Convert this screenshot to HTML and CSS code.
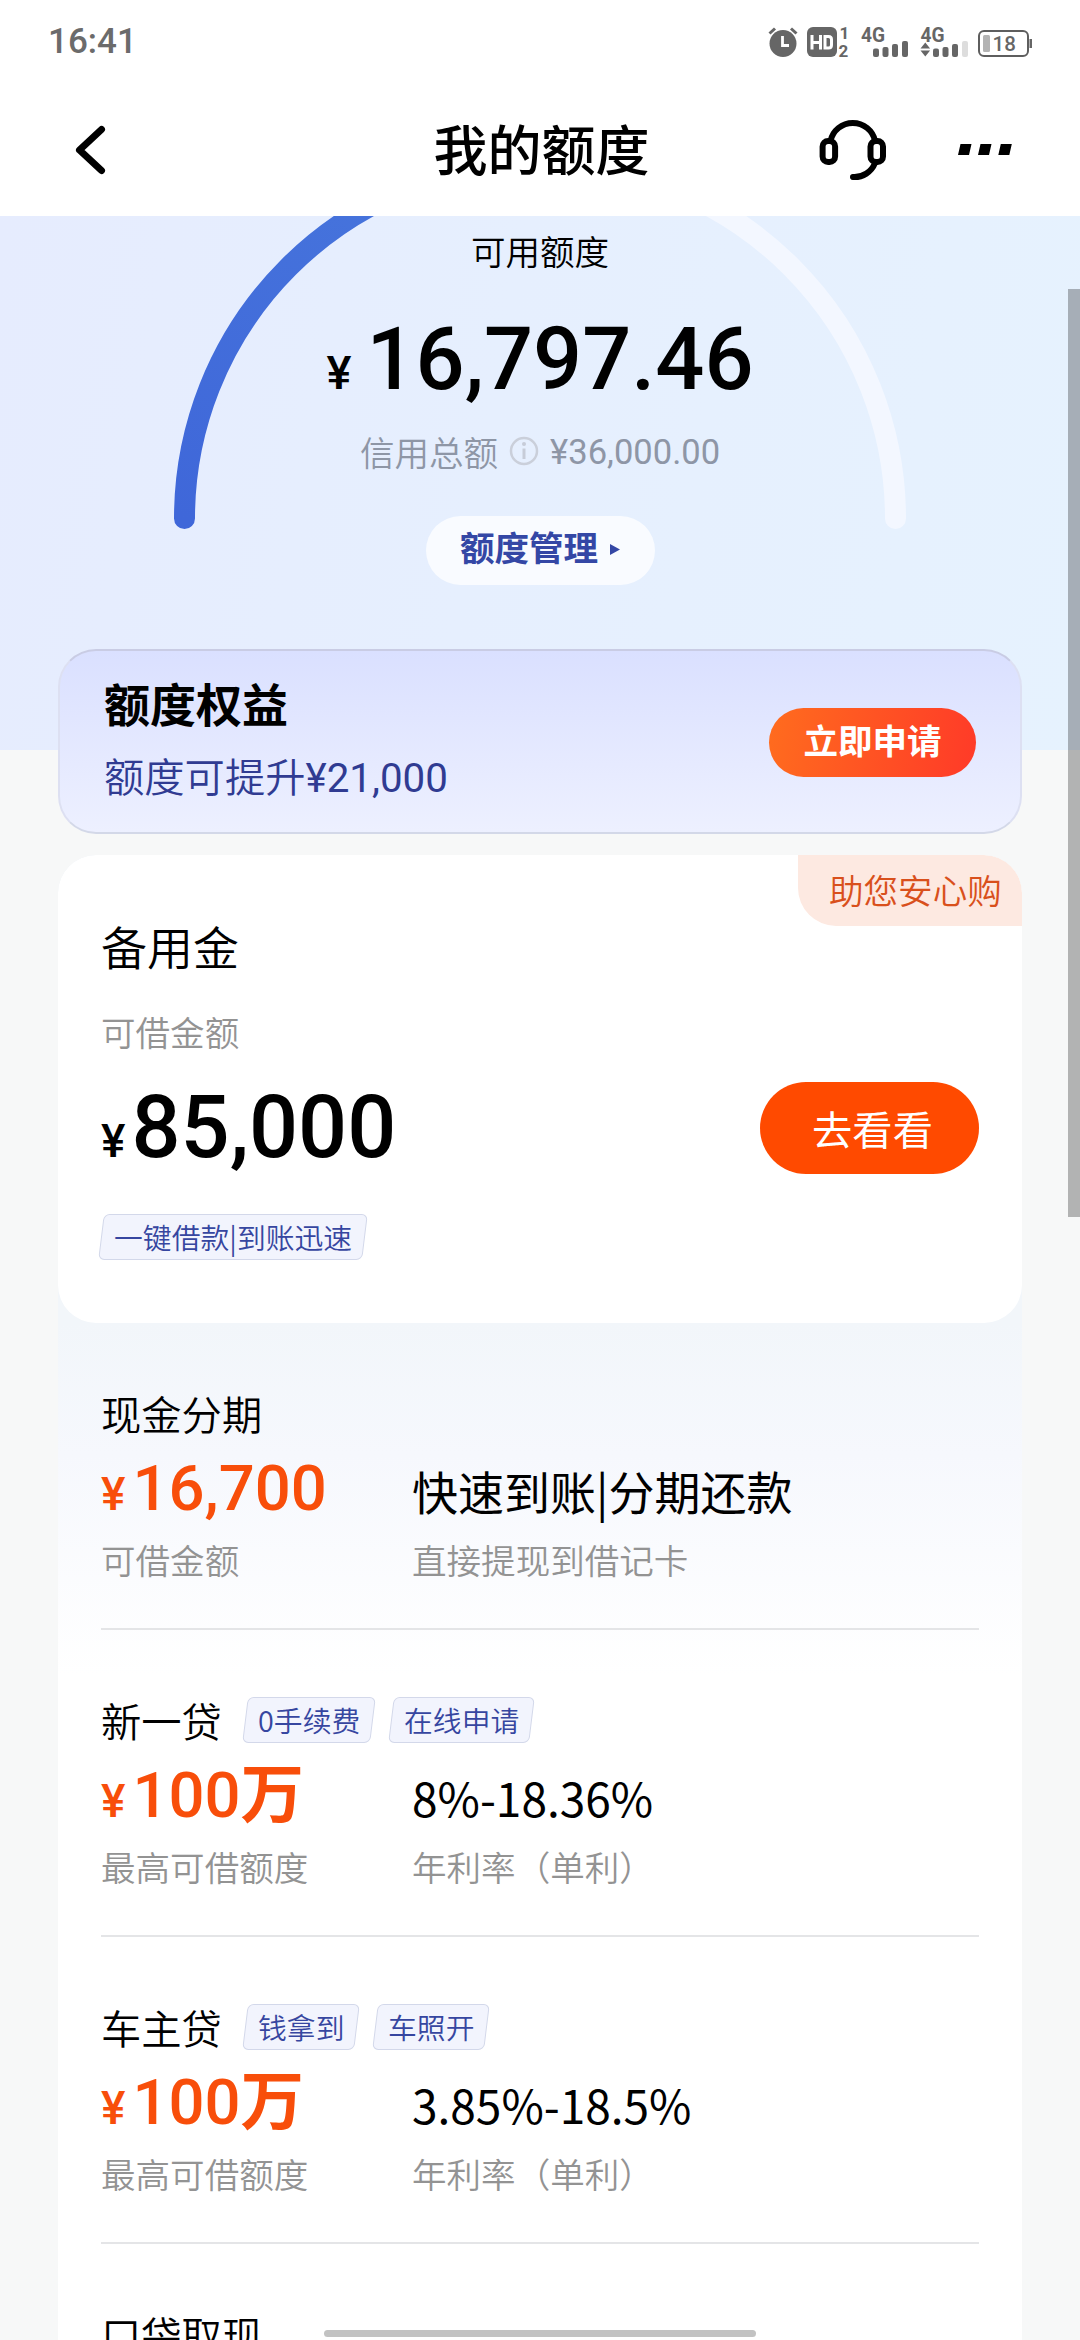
FILE: index.html
```html
<!DOCTYPE html>
<html lang="zh-CN">
<head>
<meta charset="utf-8">
<title>我的额度</title>
<link rel="stylesheet" href="styles.css">
</head>
<body>
<div class="screen">
  <div class="statusbar">
    <span class="clock">16:41</span>
    <svg class="status-icons" width="266" height="36" viewBox="767 24 266 36">
      <g fill="#666">
        <circle cx="783" cy="43.5" r="13.5"/>
        <path d="M769.5 33.5l5.500-5M796.500 33.500l-5.500-5" stroke="#666" stroke-width="3"/>
        <path d="M782.500 36v9.500h6.500" fill="none" stroke="#fff" stroke-width="2.800"/>
        <rect x="807" y="27" width="30" height="30" rx="6"/>
        <path d="M812 35v14.500M820.500 35v14.500M812 42.500h8.500M825 36.500h3.500q3 0 3 3v5.500q0 3-3 3h-3.500z" fill="none" stroke="#fff" stroke-width="3"/>
        <g class="mini">
          <text x="839.500" y="39" font-size="17">1</text>
          <text x="838.500" y="56.500" font-size="17">2</text>
          <text x="861" y="41.500" font-size="20" textLength="24" lengthAdjust="spacingAndGlyphs">4G</text>
          <text x="920.500" y="41.500" font-size="20" textLength="24" lengthAdjust="spacingAndGlyphs">4G</text>
        </g>
        <rect x="873" y="48.500" width="6" height="8.500" rx="2"/>
        <rect x="882.500" y="47" width="6" height="10" rx="2"/>
        <rect x="892" y="44" width="6" height="13" rx="2"/>
        <rect x="902" y="41" width="6" height="16" rx="2"/>
        <path d="M920.500 48.500l4.800-6 4.800 6zM920.500 50.500l4.800 6 4.800-6z"/>
        <rect x="933" y="48.500" width="6" height="8.500" rx="2"/>
        <rect x="942.500" y="47" width="6" height="10" rx="2"/>
        <rect x="952" y="44" width="6" height="13" rx="2"/>
        <rect x="962" y="41" width="6" height="16" rx="2" fill="#ddd"/>
        <rect x="979" y="31" width="49" height="25" rx="5" fill="none" stroke="#5e5e5e" stroke-width="2"/>
        <rect x="1029.500" y="39" width="2.500" height="9"/>
        <rect x="983" y="35" width="7" height="17" rx="1.500" fill="#b3b3b3"/>
        <text class="level" x="992.500" y="51" font-size="20.500">18</text>
      </g>
    </svg>
  </div>

  <header class="navbar">
    <svg class="back" width="40" height="56" viewBox="70 122 40 56"><path d="M101.500 129.500L79.500 150l22 20.500" fill="none" stroke="#000" stroke-width="7" stroke-linecap="round" stroke-linejoin="round"/></svg>
    <h1>我的额度</h1>
    <div class="actions">
      <svg width="70" height="64" viewBox="817 118 70 64"><g fill="none" stroke="#000" stroke-width="6" stroke-linecap="round"><path d="M829.500 141a22.800 22.800 0 0 1 44.600 0"/><rect x="821.600" y="141" width="12.500" height="21" rx="5.500"/><rect x="869.500" y="141" width="12.500" height="21" rx="5.500"/><path d="M874 163a22 22 0 0 1-22 14"/></g></svg>
      <svg width="56" height="14" viewBox="956 143 56 14"><path d="M959.500 144h11l-2.500 11h-11zM979.500 144h11l-2.500 11h-11zM999.800 144h11l-2.500 11h-11z"/></svg>
    </div>
  </header>

  <main class="content">
    <section class="hero">
      <svg class="gauge" width="1080" height="534" viewBox="0 216 1080 534">
        <defs><linearGradient id="arc" x1="0" y1="1" x2="0.5" y2="0"><stop offset="0" stop-color="#3f67d9"/><stop offset="1" stop-color="#4674dc"/></linearGradient></defs>
        <path d="M540 163A355.500 355.500 0 0 1 895.500 518.500" fill="none" stroke="#f3f7ff" stroke-width="21" stroke-linecap="round"/>
        <path d="M184.500 518.500A355.500 355.500 0 0 1 540 163" fill="none" stroke="url(#arc)" stroke-width="21" stroke-linecap="round"/>
      </svg>
      <div class="hero-label">可用额度</div>
      <div class="hero-amount"><span class="yen">¥</span><span>16,797.46</span></div>
      <div class="hero-total">
        <span>信用总额</span>
        <svg width="30" height="30" viewBox="0 0 30 30"><circle cx="15" cy="15" r="13" fill="none" stroke="#cacfda" stroke-width="2.500"/><path d="M15 12.500v10.500" stroke="#c7ccd8" stroke-width="3"/><circle cx="15" cy="8" r="2" fill="#c7ccd8"/></svg>
        <span class="num">¥36,000.00</span>
      </div>
      <div class="manage">额度管理<svg width="10" height="11" viewBox="0 0 10 11"><path d="M0 0l10 5.500-10 5.500z" fill="#3447a5"/></svg></div>
    </section>

    <section class="rights">
      <div>
        <h2>额度权益</h2>
        <p>额度可提升<span class="num">¥21,000</span></p>
      </div>
      <div class="apply">立即申请</div>
    </section>

    <section class="products">
      <div class="reserve">
        <div class="ribbon">助您安心购</div>
        <h3>备用金</h3>
        <div class="caption">可借金额</div>
        <div class="reserve-row">
          <div class="reserve-amount"><span class="yen">¥</span>85,000</div>
          <div class="look">去看看</div>
        </div>
        <div class="tags"><span class="tag"><span>一键借款|到账迅速</span></span></div>
      </div>

      <div class="loan">
        <div class="loan-head">现金分期</div>
        <div class="loan-main"><div class="amount"><span class="yen">¥</span>16,700</div><div class="info">快速到账|分期还款</div></div>
        <div class="loan-sub"><div>可借金额</div><div>直接提现到借记卡</div></div>
      </div>
      <div class="loan">
        <div class="loan-head">新一贷<span class="tag"><span>0手续费</span></span><span class="tag"><span>在线申请</span></span></div>
        <div class="loan-main"><div class="amount"><span class="yen">¥</span>100<span class="wan">万</span></div><div class="info">8%-18.36%</div></div>
        <div class="loan-sub"><div>最高可借额度</div><div>年利率（单利）</div></div>
      </div>
      <div class="loan">
        <div class="loan-head">车主贷<span class="tag"><span>钱拿到</span></span><span class="tag"><span>车照开</span></span></div>
        <div class="loan-main"><div class="amount"><span class="yen">¥</span>100<span class="wan">万</span></div><div class="info">3.85%-18.5%</div></div>
        <div class="loan-sub"><div>最高可借额度</div><div>年利率（单利）</div></div>
      </div>
      <div class="loan">
        <div class="loan-head">口袋取现</div>
      </div>
    </section>
  </main>
  <div class="scrollbar"></div>
  <div class="home-indicator"></div>
</div>
</body>
</html>
```
FILE: styles.css
```css
* { box-sizing: border-box; }
body, h1, h2, h3, p { margin: 0; }
body {
  background: #fff;
  color: #000;
  font-family: "Noto Sans CJK SC", sans-serif;
  font-weight: 350;
}
.screen { position: relative; width: 1080px; height: 2340px; overflow: hidden; display: flex; flex-direction: column; }
.num { font-family: Roboto, sans-serif; line-height: 0; font-weight: 400; }

.statusbar { height: 84px; flex: none; display: flex; justify-content: space-between; align-items: flex-start; padding: 24px 47px 0 48px; }
.clock { font: 500 35px/36px Roboto, sans-serif; color: #6b6b6b; }
.mini text { font-family: Roboto, sans-serif; font-weight: 700; }
.level { font-family: Roboto, sans-serif; font-weight: 500; }

.navbar { height: 132px; flex: none; display: grid; grid-template-columns: 1fr auto 1fr; align-items: center; padding: 0 67px 0 70px; }
.navbar h1 { font-size: 54px; line-height: 127px; font-weight: 500; height: 132px; }
.actions { display: flex; align-items: center; justify-content: flex-end; gap: 69px; }

.content { flex: 1; min-height: 0; background: #f7f8f8; display: flex; flex-direction: column; }
.hero {
  position: relative; flex: none; height: 534px;
  background: linear-gradient(100deg, #e6ecfe 0%, #e6effe 45%, #e6f2fe 100%);
  display: flex; flex-direction: column; align-items: center;
}
.gauge { position: absolute; left: 0; top: 0; }
.hero-label, .hero-amount, .hero-total, .manage { position: relative; }
.hero-label { margin-top: 9px; font-size: 34.56px; line-height: 50px; }
.hero-amount { margin-top: 35px; height: 100px; display: flex; align-items: baseline; gap: 15px; font: 500 86.4px/100px Roboto, sans-serif; }
.hero-amount .yen { font-size: 47px; }
.hero-total { margin-top: 16px; height: 50px; display: flex; align-items: center; gap: 11px; font-size: 34.56px; line-height: 50px; color: #8e96a6; }
.hero-total .num { line-height: 50px; padding-top: 2px; }
.manage { margin-top: 40px; width: 229px; height: 69px; border-radius: 35px; background: rgba(255,255,255,.75); color: #3447a5; font-size: 34.56px; line-height: 61px; font-weight: 700; display: flex; justify-content: center; gap: 12px; }
.manage svg { margin-top: 28px; }

.rights {
  position: relative; flex: none; margin: -101px 58px 0; height: 185px; padding: 18px 46px 0 44px;
  border-radius: 38px; border: 2px solid #c9cce4; border-left-color: #dde0f2; border-right-color: #dde0f2; border-bottom-color: #d3d8e8;
  background: linear-gradient(#dae0ff, #edf0ff);
  display: flex; justify-content: space-between;
}
.rights h2 { font-size: 46px; line-height: 66px; font-weight: 700; }
.rights p { margin-top: 11px; font-size: 40.3px; line-height: 58px; height: 58px; color: #303b92; }
.apply { margin-top: 39px; width: 207px; height: 69px; border-radius: 35px; background: linear-gradient(100deg, #ff6c1e, #ff3a28); color: #fff; font-size: 34.56px; line-height: 62px; font-weight: 700; text-align: center; margin-right: -2px; }

.products { flex: none; height: 1486px; margin: 21px 58px 0; border-radius: 38px 38px 0 0; background: linear-gradient(#f2f6fa 468px, #f6f8fd 600px, #fff 820px); overflow: hidden; }
.reserve { position: relative; height: 468px; border-radius: 38px; background: #fff; padding: 57px 43px 0; }
.ribbon { position: absolute; right: 0; top: 0; width: 224px; height: 71px; border-radius: 0 38px 0 38px; background: #fde9e1; color: #d9501c; font-size: 34.56px; line-height: 68px; padding-left: 31px; }
.reserve h3 { font-size: 46px; line-height: 66px; font-weight: 350; }
.caption { margin-top: 28px; font-size: 34.56px; line-height: 50px; color: #939393; }
.reserve-row { display: flex; justify-content: space-between; margin-top: 26px; height: 92px; }
.reserve-amount { font: 500 86.4px/92px Roboto, sans-serif; }
.reserve-amount .yen { font-size: 46px; margin-right: 6px; }
.look { width: 219px; height: 92px; border-radius: 46px; background: #ff4a00; color: #fff; font-size: 40.3px; line-height: 92px; font-weight: 400; text-align: center; padding-left: 6px; }
.tags { margin-top: 40px; display: flex; }

.tag { height: 46px; padding: 0 12px; border: 1px solid #d3d8ea; border-radius: 6px; background: #f2f4fd; color: #3646a0; transform: skewX(-7deg); font-size: 28.8px; line-height: 43px; }
.tag > span { display: block; transform: skewX(7deg); }

.loan { height: 307px; margin: 0 43px; padding-top: 67px; border-bottom: 2px solid #e4e5e7; }
.loan-head { display: flex; align-items: center; height: 46px; font-size: 40.3px; line-height: 58px; }
.loan-head .tag { margin-left: 18px; line-height: 43px; }
.loan-head .tag:first-of-type { margin-left: 23px; }
.loan-main { height: 70px; margin-top: 17px; display: grid; grid-template-columns: 311px 1fr; align-items: baseline; }
.amount { color: #f84e0a; font: 500 63.4px/70px Roboto, sans-serif; }
.amount .yen { font-size: 46px; margin-right: 7px; }
.wan { font-family: "Noto Sans CJK SC", sans-serif; font-weight: 700; line-height: 0; }
.info { font-size: 46px; line-height: 70px; font-weight: 400; }
.loan-sub { display: grid; grid-template-columns: 311px 1fr; margin-top: 13px; font-size: 34.56px; line-height: 46px; color: #939393; }

.scrollbar { position: absolute; right: 0; top: 289px; width: 12px; height: 928px; background: rgba(0,0,0,.28); }
.home-indicator { position: absolute; left: 324px; top: 2330px; width: 432px; height: 7px; border-radius: 4px; background: #c2c2c2; }
```
